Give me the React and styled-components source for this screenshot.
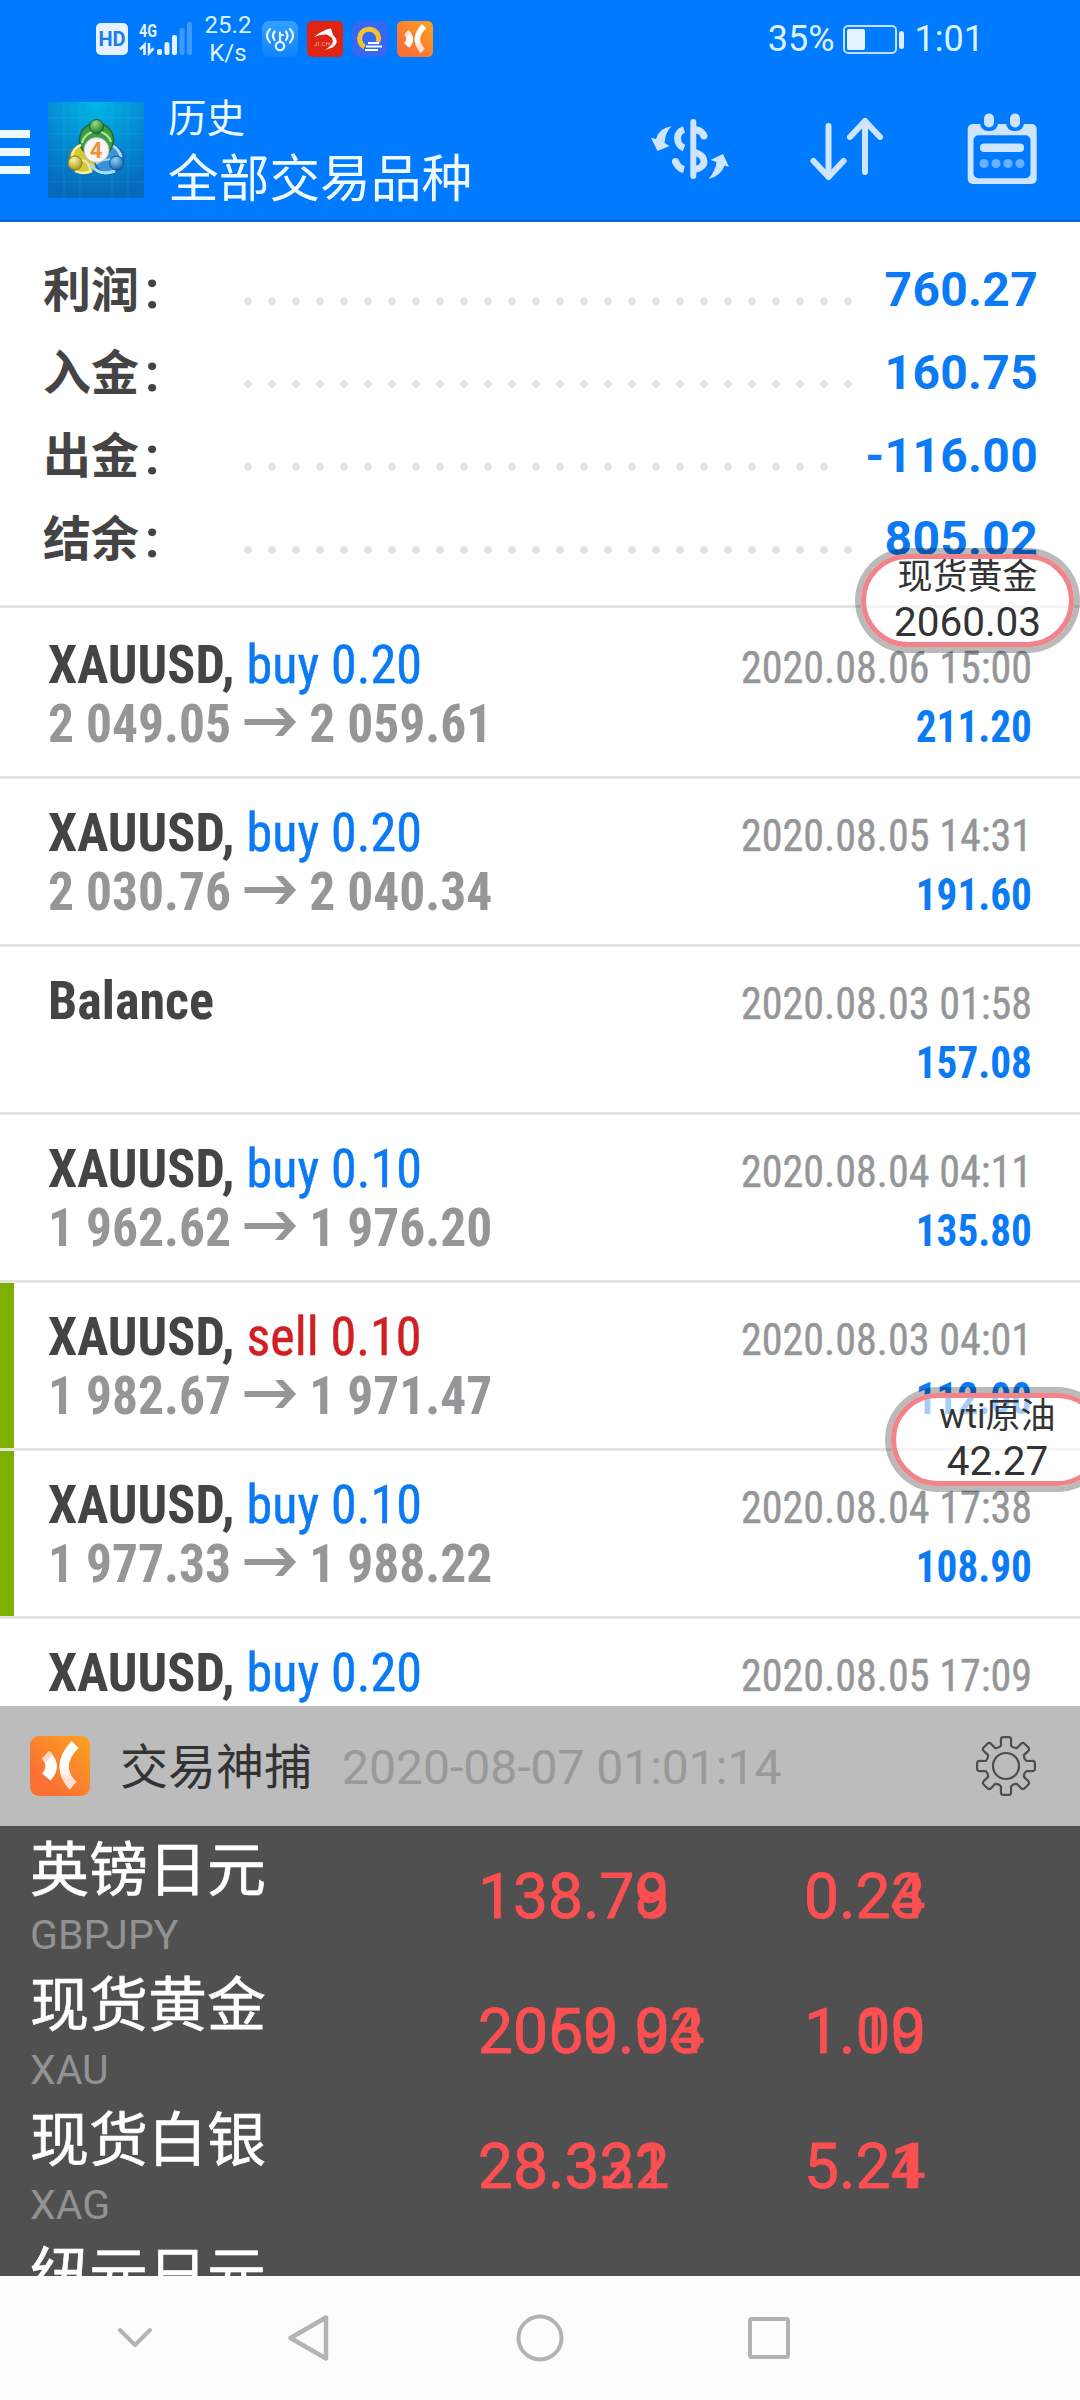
import React from 'react'
import styled, { createGlobalStyle } from 'styled-components'

const GlobalStyle = createGlobalStyle`
  body {
    margin: 0;
    background: #fff;
  }
  * {
    box-sizing: border-box;
  }
  svg {
    display: block;
    flex: none;
    overflow: visible;
  }
`

const Screen = styled.div`
  position: relative;
  width: 1080px;
  height: 2400px;
  overflow: hidden;
  display: flex;
  flex-direction: column;
  background: #fff;
  font-family: Roboto, 'Noto Sans CJK SC', sans-serif;
  white-space: nowrap;
`

const Header = styled.header`
  background: #007aff;
  border-bottom: 3px solid #0a68dc;
`

const StatusBar = styled.div`
  display: flex;
  align-items: center;
  height: 81px;
  padding: 0 96px 3px 96px;
  color: #dcf3ff;
`

const HdBadge = styled.div`
  width: 32px;
  height: 32px;
  margin-right: 11px;
  border-radius: 5px;
  background: #e6f2ff;
  color: #1a7cf0;
  font: 700 20px/33px Roboto, sans-serif;
  text-align: center;
`

const Speed = styled.div`
  width: 48px;
  margin: 0 10px 0 12px;
  font-size: 24px;
  line-height: 28px;
  text-align: center;
`

const TrayIcons = styled.div`
  display: flex;
  gap: 9px;
`

const StatusText = styled.span`
  font-size: 36px;
  line-height: 44px;
`

const BatteryPercent = styled(StatusText)`
  margin-left: auto;
`

const Battery = styled.div`
  position: relative;
  width: 54px;
  height: 29px;
  margin: 0 18px 0 8px;
  padding: 2px;
  border: 2px solid #bfe0ff;
  border-radius: 5px;

  &::after {
    content: '';
    position: absolute;
    right: -9px;
    top: 4px;
    width: 5px;
    height: 18px;
    border-radius: 3px;
    background: #dceeff;
  }
`

const BatteryLevel = styled.div`
  height: 100%;
  border-radius: 2px;
  background: #e6f2ff;
`

const TitleBar = styled.div`
  display: flex;
  align-items: center;
  height: 138px;
  padding-right: 43px;
`

const MenuButton = styled.div`
  display: flex;
  flex-direction: column;
  gap: 10px;
  width: 30px;
  margin: 4px 18px 0 0;

  i {
    height: 8px;
    background: #ecf7ff;
  }
`

const Titles = styled.div`
  margin-left: 24px;
  padding-top: 1px;
  color: #eefaff;
`

const Crumb = styled.div`
  font-size: 38.5px;
  line-height: 58px;
`

const PageTitle = styled.div`
  font-size: 50.7px;
  line-height: 63px;
`

const Actions = styled.div`
  display: flex;
  align-items: center;
  gap: 81px;
  margin-left: auto;
  padding-bottom: 3px;
`

const Summary = styled.section`
  height: 386px;
  padding: 26px 42px 0 43px;
  border-bottom: 3px solid #e4e4e4;
  margin-bottom: 3px;
`

const SummaryRow = styled.div`
  display: flex;
  height: 83px;
  font-size: 48px;
  font-weight: 700;
  line-height: 83px;
`

const SummaryLabel = styled.div`
  display: flex;
  width: 193px;
  padding-top: 1px;
  color: #444;
`

const Colon = styled.span`
  margin-left: 6px;
  font-size: 51px;
`

const Leader = styled.div`
  flex: 1;
  margin-right: 22px;
  height: 8px;
  margin-top: 49px;
  background: radial-gradient(circle at center, #e2e2e2 3.4px, transparent 4.2px) 0 0 / 24px 8px;
`

const SummaryValue = styled.div`
  color: #0a7af5;
  letter-spacing: 0.3px;
`

const DealRow = styled.div`
  flex: none;
  height: 168px;
  padding: 24px 48px 0 48px;
  border-bottom: 3px solid #e4e4e4;
  box-shadow: ${p => (p.$marked ? 'inset 14px 0 0 #7fb000' : 'none')};
`

const DealLine = styled.div`
  display: flex;
  align-items: baseline;
  height: 59px;
  font-family: 'Roboto Condensed', Roboto, sans-serif;
  font-stretch: 75%;
  font-size: 54px;
  line-height: 59px;

  /* keeps the baseline where the left side is empty */
  &::before {
    content: '\\200b';
  }
`

const DealTitle = styled.div`
  color: #444;
  transform: scaleX(0.965);
  transform-origin: left;
`

const Symbol = styled.span`
  font-weight: 700;
`

const Side = styled.span`
  color: ${p => (p.$side === 'sell' ? '#d02024' : '#0a7af5')};
  -webkit-text-stroke: 0.5px currentColor;
`

const Prices = styled.div`
  display: flex;
  align-items: baseline;
  gap: 14px;
  color: #949698;
  font-weight: 700;
  transform: scaleX(0.954);
  transform-origin: left;

  svg {
    transform: translateY(-6px);
  }
`

const DealTime = styled.span`
  margin-left: auto;
  color: #949698;
  font-size: 45px;
  transform: scaleX(0.936);
  transform-origin: right;
  -webkit-text-stroke: 0.4px #949698;
`

const Profit = styled.span`
  margin-left: auto;
  color: #0a7af5;
  font-size: 45px;
  font-weight: 700;
  transform: scaleX(0.915);
  transform-origin: right;
`

const Deals = styled.section`
  height: 1095px;
  overflow: hidden;
`

const PanelHeader = styled.div`
  display: flex;
  align-items: center;
  height: 120px;
  padding: 0 44px 0 30px;
  background: #bcbcbc;
  font-size: 48px;
  line-height: 60px;
`

const PanelTitle = styled.div`
  margin-left: 30px;
  padding-top: 3px;
  color: #333;
`

const PanelTime = styled.div`
  margin: 0 auto 0 30px;
  padding-top: 3px;
  color: #999;
`

const Quotes = styled.section`
  height: 450px;
  overflow: hidden;
  background: #505050;
`

const QuoteRow = styled.div`
  display: grid;
  grid-template-columns: 448px 326px 1fr;
  height: 135px;
  padding-left: 30px;
`

const QuoteName = styled.div`
  padding-top: 5px;
  color: #fff;
  font-size: 59px;
  line-height: 80px;
  -webkit-text-stroke: 0.6px #fff;
`

const QuoteCode = styled.div`
  color: #929292;
  font-size: 41px;
  line-height: 48px;
`

/* old and new tick are painted over each other */
const Ticks = styled.div`
  display: grid;
  align-content: start;
  padding-top: 31px;
  color: #fb4f52;
  font-size: 62.3px;
  line-height: 80px;
  -webkit-text-stroke: 0.6px #fb4f52;

  span {
    grid-area: 1 / 1;
  }
`

const NavBar = styled.nav`
  display: flex;
  align-items: center;
  height: 124px;
  padding-left: 117px;
  background: #fcfcfc;
`

const NavGap = styled.div`
  width: ${p => p.$w}px;
`

const Bubble = styled.div`
  position: absolute;
  left: ${p => p.$x}px;
  top: ${p => p.$y}px;
  width: 225px;
  height: 105px;
  border: 6px solid rgba(0, 0, 0, 0.27);
  border-radius: 53px;
  background: rgba(255, 255, 255, 0.62);
  background-clip: padding-box;
`

const BubbleInner = styled.div`
  height: 93px;
  border: 5px solid #f28388;
  border-radius: 47px;
  color: #333;
  text-align: center;
`

const BubbleName = styled.div`
  font-size: 35px;
  line-height: 42px;
  margin-top: -2px;
`

const BubblePrice = styled.div`
  font-size: 40.5px;
  line-height: 46px;
`

const SignalIcon = () => (
  <svg width="53" height="36" viewBox="0 0 53 36">
    <text x="0" y="16" fontFamily="Roboto" fontWeight="700" fontSize="19" fill="#e6f2ff" textLength="18" lengthAdjust="spacingAndGlyphs">4G</text>
    <path d="M1 28.500l4.500-4.500v10M10 22v10l4.500-4.500" fill="none" stroke="#e6f2ff" strokeWidth="2.600" />
    <rect x="18" y="28" width="5" height="6" rx="2" fill="#e6f2ff" />
    <rect x="25.500" y="21" width="5" height="13" rx="2" fill="#e6f2ff" />
    <rect x="33" y="14" width="5" height="20" rx="2" fill="#e6f2ff" />
    <rect x="40.500" y="7" width="5" height="27" rx="2" fill="#3d9bff" />
    <rect x="48" y="1" width="5" height="33" rx="2" fill="#3d9bff" />
  </svg>
)

const HotspotIcon = () => (
  <svg width="36" height="36" viewBox="0 0 36 36">
    <defs>
      <linearGradient id="hot" x1="0" y1="0" x2="0" y2="1">
        <stop offset="0" stopColor="#35a0ff" />
        <stop offset="1" stopColor="#0d83fb" />
      </linearGradient>
    </defs>
    <rect width="36" height="36" rx="7" fill="url(#hot)" />
    <g fill="none" stroke="#e8f6ff" strokeWidth="2.200" strokeLinecap="round">
      <circle cx="18" cy="25" r="4.200" />
      <path d="M18 21V11.500M18 14h3M12.500 10.500q-3 4 0 8.500M8 8q-6 6.500 0 13.500M24 10.500q3 4 0 8.500M28 8q6 6.500 0 13.500" />
    </g>
  </svg>
)

const RedAppIcon = () => (
  <svg width="36" height="36" viewBox="0 0 36 36">
    <rect width="36" height="36" rx="5" fill="#df2412" />
    <path d="M7 16Q15 9 24 7.500L26 14Q33.500 21 25.500 26.500L18 29Q29 22 24.500 16.500L20 13.500Q13 13 7 16Z" fill="#fff" />
    <text x="7" y="24.500" fontFamily="Roboto" fontSize="6" fill="#ffb9b0" textLength="16">JI.CH</text>
  </svg>
)

const CloudAppIcon = () => (
  <svg width="36" height="36" viewBox="0 0 36 36">
    <rect width="36" height="36" rx="8" fill="#3468f5" />
    <path d="M12.500 26A9.500 9.500 0 1 1 26 21" fill="none" stroke="#f5c12e" strokeWidth="5" />
    <path d="M16 22h11M14 25.500h16M13 29h13" stroke="#fff" strokeWidth="1.800" />
  </svg>
)

const CatchLogo = ({ size, id }) => (
  <svg width={size} height={size} viewBox="0 0 60 60">
    <defs>
      <linearGradient id={id} x1="1" y1="0" x2="0.300" y2="0.800">
        <stop offset="0" stopColor="#fda321" />
        <stop offset="1" stopColor="#fa7134" />
      </linearGradient>
      <linearGradient id={id + 'b'} x1="0" y1="0" x2="0" y2="1">
        <stop offset="0.500" stopColor="#fff" />
        <stop offset="0.800" stopColor="#ffe0d2" />
      </linearGradient>
    </defs>
    <rect width="60" height="60" rx="9" fill={`url(#${id})`} />
    <path d="M41.700 5L48.600 12Q30 30 46.500 45.700L39.600 53.700Q18 30 41.700 5Z" fill={`url(#${id}b)`} />
    <path d="M19.300 15L12 22.500Q19 30 12 37.500L20.500 44.500Q34 30 19.300 15Z" fill="#fff" />
    <path d="M19.300 15L12 22.500L15.200 27L22.500 19.500Z" fill="#ffd9c6" />
  </svg>
)

const MetaLogo = () => (
  <svg width="96" height="96" viewBox="0 0 96 96">
    <defs>
      <radialGradient id="sky" cx="0.500" cy="0" r="1">
        <stop offset="0" stopColor="#00b8e6" />
        <stop offset="0.550" stopColor="#0488d0" />
        <stop offset="1" stopColor="#0668b8" />
      </radialGradient>
      <radialGradient id="gr" cx="0.400" cy="0.300" r="0.700">
        <stop offset="0" stopColor="#9bdc7c" />
        <stop offset="1" stopColor="#1d7a34" />
      </radialGradient>
      <radialGradient id="ye" cx="0.400" cy="0.300" r="0.700">
        <stop offset="0" stopColor="#fbf6a8" />
        <stop offset="1" stopColor="#a89a17" />
      </radialGradient>
      <radialGradient id="bl" cx="0.400" cy="0.300" r="0.700">
        <stop offset="0" stopColor="#8fd2f8" />
        <stop offset="1" stopColor="#1568b0" />
      </radialGradient>
    </defs>
    <rect width="96" height="96" fill="url(#sky)" />
    <path d="M16 0v96M32 0v96M64 0v96M80 0v96M0 16h96M0 32h96M0 48h96M0 64h96M0 80h96" stroke="#5cc8f0" strokeOpacity="0.150" />
    <circle cx="36" cy="57" r="14.500" fill="#d5c93a" stroke="#8a7f18" strokeWidth="1.500" />
    <circle cx="61" cy="57" r="14.500" fill="#3794d8" stroke="#1c62a8" strokeWidth="1.500" />
    <circle cx="48.500" cy="38" r="17" fill="#3d9c46" stroke="#1d6a30" strokeWidth="1.500" />
    <path d="M34 41a15 15 0 0 1 29-1" fill="none" stroke="#b5e59a" strokeWidth="2" />
    <path d="M24 55a13 13 0 0 1 9-12M27 69q8 4 17 0" fill="none" stroke="#f7f1a0" strokeWidth="2.500" />
    <path d="M42 62q9 13 25 7M73 55q-2-8-8-11" fill="none" stroke="#a5dcf8" strokeWidth="3" />
    <path d="M31 58q10-1 11 11M66 58q-10-2-18 4" fill="none" stroke="#fff" strokeOpacity="0.600" strokeWidth="2" />
    <circle cx="48.500" cy="24.500" r="7" fill="url(#gr)" stroke="#175f2b" />
    <circle cx="27" cy="61" r="7" fill="url(#ye)" stroke="#857a12" />
    <circle cx="68.500" cy="61" r="7" fill="url(#bl)" stroke="#11558f" />
    <circle cx="48.500" cy="48" r="12.500" fill="#f6f6f4" stroke="#b9bdb9" />
    <text x="48" y="56" textAnchor="middle" fontFamily="Roboto" fontWeight="700" fontSize="22" fill="#f09038">4</text>
  </svg>
)

const CurrencyIcon = () => (
  <svg width="78" height="60" viewBox="0 0 78 60" fill="#cfe5ff">
    <path d="M20.600 7.300Q8 9 5 20L0 18.700L6.500 32L18.600 27L13.600 24Q14 14 20.600 7.300Z" />
    <path d="M57.500 60Q65 51 65.500 43L59.500 41L72 35L78 48L73.500 46.500Q70 57 57.500 60Z" />
    <rect x="39.300" y="0" width="6" height="60" rx="3" />
    <g fill="none" stroke="#cfe5ff" strokeWidth="7">
      <path d="M33 10.500C24.500 13 24.500 26 33 29" />
      <path d="M33 50.500Q26.500 49 24.500 42" />
      <path d="M44 10.500Q52 12 53 17.500" />
      <path d="M44 33.500C56 37 56 48 44 50.500" />
      <path d="M24.500 42.500v0M53 17v0" strokeLinecap="round" />
    </g>
  </svg>
)

const SortIcon = () => (
  <svg width="76" height="64" viewBox="0 0 76 64">
    <path
      d="M18.500 9v51M3.500 44l15 16l15-16M55 55V4M40 20L55 4l15 16"
      fill="none" stroke="#cfe5ff" strokeWidth="6" strokeLinecap="round" strokeLinejoin="round"
    />
  </svg>
)

const CalendarIcon = () => (
  <svg width="70" height="71" viewBox="0 0 70 71">
    <rect x="0.700" y="11" width="69" height="60" rx="5" fill="#cfe5ff" />
    <rect x="6.500" y="22.300" width="57" height="43" rx="5" fill="#007aff" />
    <rect x="13" y="-4" width="18" height="22" rx="8" fill="#007aff" />
    <rect x="39" y="-4" width="18" height="22" rx="8" fill="#007aff" />
    <rect x="17" y="0.500" width="10" height="14" rx="5" fill="#cfe5ff" />
    <rect x="43" y="0.500" width="10" height="14" rx="5" fill="#cfe5ff" />
    <rect x="13" y="30.500" width="44" height="8.500" rx="4" fill="#cfe5ff" />
    <g fill="#6bb1ff">
      <circle cx="17" cy="50.500" r="4.500" />
      <circle cx="29" cy="50.500" r="4.500" />
      <circle cx="41" cy="50.500" r="4.500" />
      <circle cx="53" cy="50.500" r="4.500" />
    </g>
  </svg>
)

const ArrowIcon = () => (
  <svg width="54" height="28" viewBox="0 0 54 28">
    <path d="M0 14h48" stroke="#949698" strokeWidth="6" />
    <path d="M32 0H40.500L54 14L40.500 28H32L45 14Z" fill="#949698" />
  </svg>
)

const point = (r, a) => `${(30 + r * Math.cos(a)).toFixed(2)} ${(30 + r * Math.sin(a)).toFixed(2)}`

const gearPath = () => {
  let d = ''
  for (let i = 0; i < 8; i++) {
    const a = (i * Math.PI) / 4
    d += `${i ? 'L' : 'M'}${point(21, a - 0.24)}L${point(27, a - 0.19)}Q${point(29.5, a - 0.17)} ${point(29, a - 0.08)}`
    d += `L${point(29, a + 0.08)}Q${point(29.5, a + 0.17)} ${point(27, a + 0.19)}L${point(21, a + 0.24)}`
    d += `Q${point(19, a + Math.PI / 8)} ${point(21, a + Math.PI / 4 - 0.24)}`
  }
  return d + 'Z'
}

const GearIcon = () => (
  <svg width="60" height="60" viewBox="0 0 60 60" fill="none" stroke="#4c4c4c" strokeWidth="2.200">
    <path d={gearPath()} strokeLinejoin="round" />
    <circle cx="30" cy="30" r="13" />
  </svg>
)

const summary = [
  ['利润', '760.27'],
  ['入金', '160.75'],
  ['出金', '-116.00'],
  ['结余', '805.02'],
]

const deals = [
  { side: 'buy', lots: '0.20', from: '2 049.05', to: '2 059.61', time: '2020.08.06 15:00', profit: '211.20' },
  { side: 'buy', lots: '0.20', from: '2 030.76', to: '2 040.34', time: '2020.08.05 14:31', profit: '191.60' },
  { time: '2020.08.03 01:58', profit: '157.08' },
  { side: 'buy', lots: '0.10', from: '1 962.62', to: '1 976.20', time: '2020.08.04 04:11', profit: '135.80' },
  { side: 'sell', lots: '0.10', from: '1 982.67', to: '1 971.47', time: '2020.08.03 04:01', profit: '112.00', marked: true },
  { side: 'buy', lots: '0.10', from: '1 977.33', to: '1 988.22', time: '2020.08.04 17:38', profit: '108.90', marked: true },
  { side: 'buy', lots: '0.20', time: '2020.08.05 17:09' },
]

const quotes = [
  { name: '英镑日元', code: 'GBPJPY', price: ['138.78', '138.79'], change: ['0.23', '0.24'] },
  { name: '现货黄金', code: 'XAU', price: ['2060.03', '2059.94'], change: ['1.09', '1.10'] },
  { name: '现货白银', code: 'XAG', price: ['28.332', '28.321'], change: ['5.21', '5.24'] },
  { name: '纽元日元', price: [], change: [] },
]

const Deal = ({ deal }) => (
  <DealRow $marked={deal.marked}>
    <DealLine>
      {deal.side ? (
        <DealTitle>
          <Symbol>XAUUSD,</Symbol> <Side $side={deal.side}>{deal.side} {deal.lots}</Side>
        </DealTitle>
      ) : (
        <DealTitle><Symbol>Balance</Symbol></DealTitle>
      )}
      <DealTime>{deal.time}</DealTime>
    </DealLine>
    <DealLine>
      {deal.from && (
        <Prices>
          <span>{deal.from}</span>
          <ArrowIcon />
          <span>{deal.to}</span>
        </Prices>
      )}
      <Profit>{deal.profit}</Profit>
    </DealLine>
  </DealRow>
)

const FloatingQuote = ({ x, y, name, price }) => (
  <Bubble $x={x} $y={y}>
    <BubbleInner>
      <BubbleName>{name}</BubbleName>
      <BubblePrice>{price}</BubblePrice>
    </BubbleInner>
  </Bubble>
)

const App = () => (
  <Screen>
    <GlobalStyle />
    <Header>
      <StatusBar>
        <HdBadge>HD</HdBadge>
        <SignalIcon />
        <Speed>25.2<br />K/s</Speed>
        <TrayIcons>
          <HotspotIcon />
          <RedAppIcon />
          <CloudAppIcon />
          <CatchLogo size={36} id="tray" />
        </TrayIcons>
        <BatteryPercent>35%</BatteryPercent>
        <Battery>
          <BatteryLevel style={{ width: '40%' }} />
        </Battery>
        <StatusText>1:01</StatusText>
      </StatusBar>
      <TitleBar>
        <MenuButton><i /><i /><i /></MenuButton>
        <MetaLogo />
        <Titles>
          <Crumb>历史</Crumb>
          <PageTitle>全部交易品种</PageTitle>
        </Titles>
        <Actions>
          <CurrencyIcon />
          <SortIcon />
          <CalendarIcon />
        </Actions>
      </TitleBar>
    </Header>

    <Summary>
      {summary.map(([label, value]) => (
        <SummaryRow key={label}>
          <SummaryLabel>{label}<Colon>:</Colon></SummaryLabel>
          <Leader />
          <SummaryValue>{value}</SummaryValue>
        </SummaryRow>
      ))}
    </Summary>

    <Deals>
      {deals.map(deal => <Deal key={deal.time} deal={deal} />)}
    </Deals>

    <PanelHeader>
      <CatchLogo size={60} id="panel" />
      <PanelTitle>交易神捕</PanelTitle>
      <PanelTime>2020-08-07 01:01:14</PanelTime>
      <GearIcon />
    </PanelHeader>
    <Quotes>
      {quotes.map(quote => (
        <QuoteRow key={quote.name}>
          <div>
            <QuoteName>{quote.name}</QuoteName>
            <QuoteCode>{quote.code}</QuoteCode>
          </div>
          <Ticks>{quote.price.map(t => <span key={t}>{t}</span>)}</Ticks>
          <Ticks>{quote.change.map(t => <span key={t}>{t}</span>)}</Ticks>
        </QuoteRow>
      ))}
    </Quotes>

    <NavBar>
      <svg width="36" height="22" viewBox="0 0 36 22">
        <path d="M3 3l15 15L33 3" fill="none" stroke="#b3b3b3" strokeWidth="4" strokeLinecap="round" strokeLinejoin="round" />
      </svg>
      <NavGap $w={134} />
      <svg width="43" height="48" viewBox="0 0 43 48">
        <path d="M39 3.500v41L3.500 24Z" fill="none" stroke="#b3b3b3" strokeWidth="4.500" strokeLinejoin="round" />
      </svg>
      <NavGap $w={186} />
      <svg width="48" height="48" viewBox="0 0 48 48">
        <circle cx="24" cy="24" r="21.500" fill="none" stroke="#b3b3b3" strokeWidth="4" />
      </svg>
      <NavGap $w={183} />
      <svg width="44" height="44" viewBox="0 0 44 44">
        <rect x="3" y="3" width="38" height="38" rx="1.500" fill="none" stroke="#b3b3b3" strokeWidth="4" />
      </svg>
    </NavBar>

    <FloatingQuote x={855} y={548} name="现货黄金" price="2060.03" />
    <FloatingQuote x={885} y={1387} name="wti原油" price="42.27" />
  </Screen>
)

export default App
